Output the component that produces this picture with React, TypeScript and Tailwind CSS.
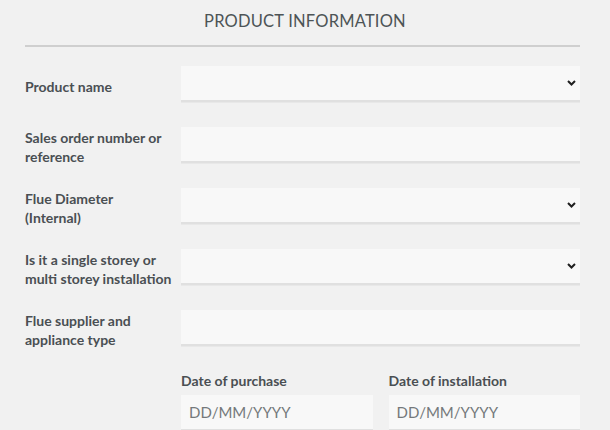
import React from "react";

type Field = {
  label: string[];
  select?: boolean;
};

const fields: Field[] = [
  { label: ["Product name"], select: true },
  { label: ["Sales order number or", "reference"] },
  { label: ["Flue Diameter", "(Internal)"], select: true },
  { label: ["Is it a single storey or", "multi storey installation"], select: true },
  { label: ["Flue supplier and", "appliance type"] },
];

const Chevron = () => (
  <svg width="9" height="6" viewBox="0 0 9 6" className="absolute right-[4px] top-1/2 -translate-y-1/2">
    <path d="M1 1 L4.5 4.5 L8 1" fill="none" stroke="#1f1f1f" strokeWidth="2" />
  </svg>
);

const Box = ({ select, placeholder }: { select?: boolean; placeholder?: string }) => (
  <div className="relative flex h-[36px] w-full items-center border-b-2 border-[#e0e0e0] bg-[#f8f8f8] px-[8px] shadow-[0_1px_0_#e8e8e8]">
    {placeholder && <span className="text-[15px] text-[#74787b]">{placeholder}</span>}
    {select && <Chevron />}
  </div>
);

const App = () => {
  return (
    <div
      className="h-[430px] w-[610px] overflow-hidden bg-[#f1f1f1] text-[#4a4f53]"
      style={{ fontFamily: "Lato, 'Open Sans', sans-serif" }}
    >
      <div className="pt-[9px] text-center text-[16.5px] leading-[24px] tracking-[0.2px] text-[#4d5456]">
        PRODUCT INFORMATION
      </div>
      <div className="mx-[25px] mt-[12px] h-[2px] w-[555px] bg-[#cfcfcf]" />
      <div className="ml-[25px] mt-[19px] flex w-[555px] flex-col gap-[25px]">
        {fields.map((f) => (
          <div key={f.label.join(" ")} className="flex h-[36px] items-center">
            <div className="w-[156px] shrink-0 pt-[4px] text-[14px] font-bold leading-[19px]">
              {f.label.map((l) => (
                <div key={l}>{l}</div>
              ))}
            </div>
            <Box select={f.select} />
          </div>
        ))}
        <div className="-mt-[2px] ml-[156px] grid grid-cols-2 gap-[16px]">
          {["Date of purchase", "Date of installation"].map((d) => (
            <div key={d} className="flex flex-col gap-[5px]">
              <div className="pt-[2px] text-[14px] font-bold leading-[19px]">{d}</div>
              <Box placeholder="DD/MM/YYYY" />
            </div>
          ))}
        </div>
      </div>
    </div>
  );
};

export default App;
